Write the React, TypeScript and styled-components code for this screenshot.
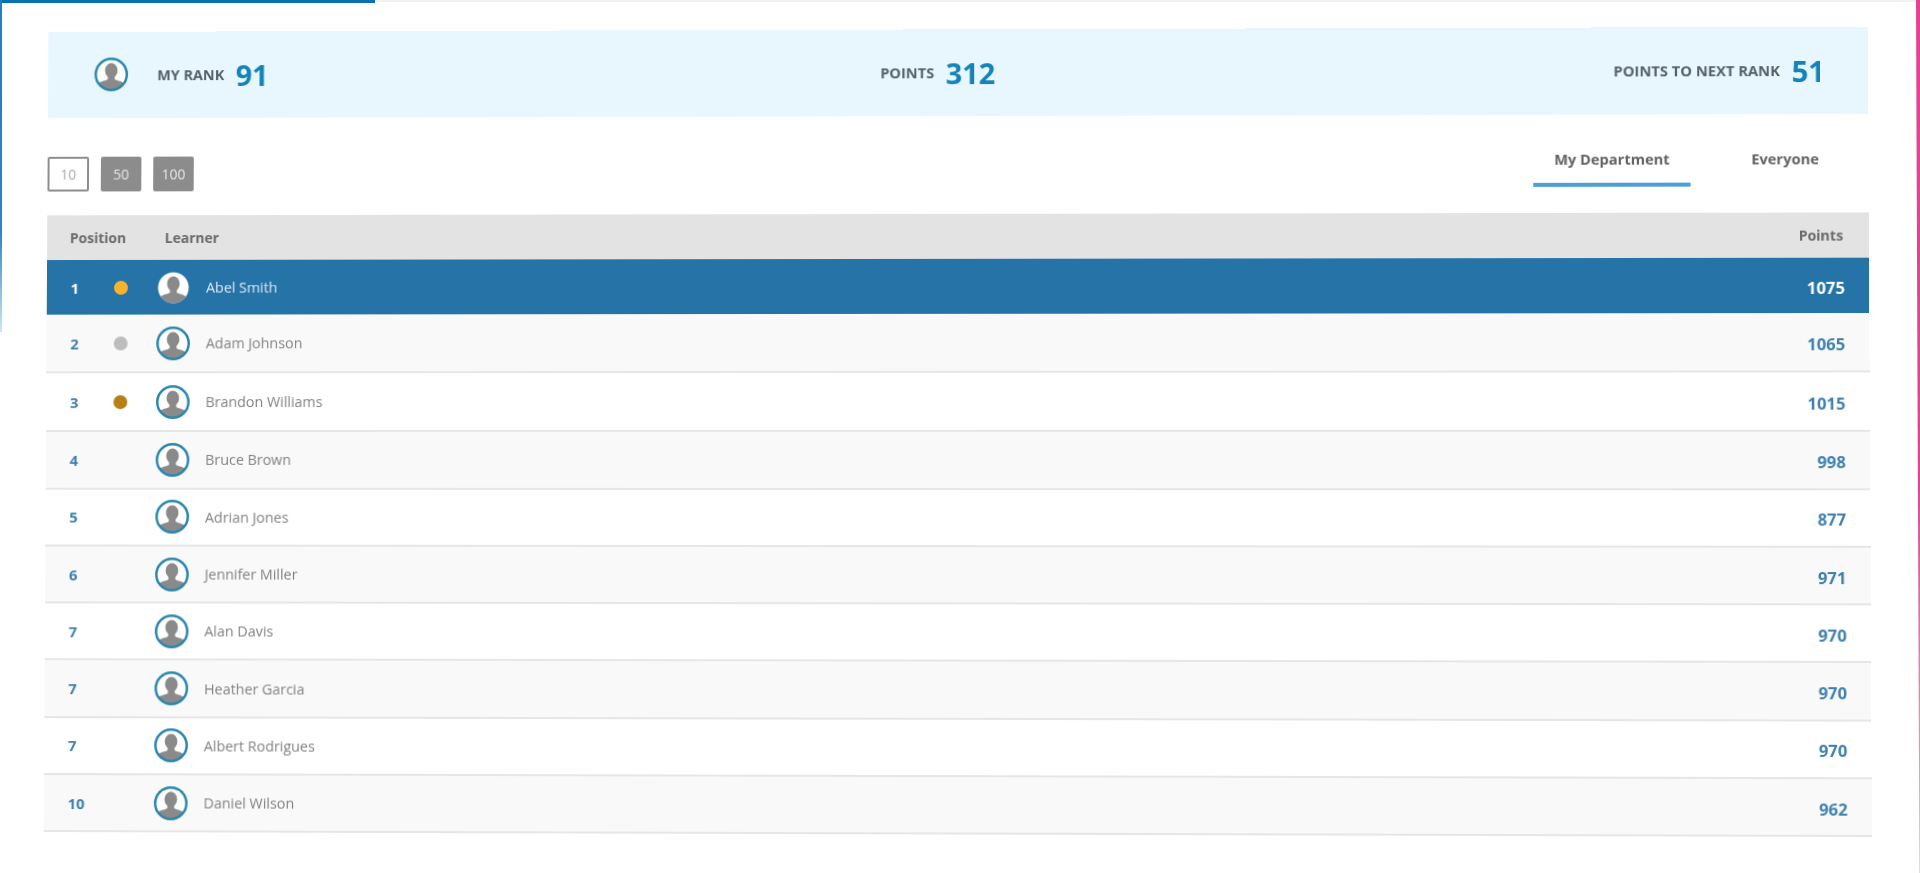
import React from 'react'
import styled, { createGlobalStyle } from 'styled-components'

const GlobalStyle = createGlobalStyle`
  html, body {
    margin: 0;
    padding: 0;
    background: #fff;
  }
  body {
    font-family: 'Open Sans', 'Liberation Sans', sans-serif;
  }
`

const Page = styled.div`
  position: relative;
  width: 1920px;
  height: 873px;
  overflow: hidden;
  background: #fff;
  padding: 30px 0 0 43px;
  box-sizing: border-box;
  filter: blur(0.45px);
`

// the reference is a video frame, so the sheet sits in a slight perspective
const Sheet = styled.div`
  width: 1821.6px;
  padding-left: 4px;
  transform-origin: 4px 0;
  transform: matrix3d(
    0.985827, -0.002887, 0, -0.000006972,
    -0.005836, 0.990081, 0, -0.000006163,
    0, 0, 1, 0,
    1.4, 2, 0, 1
  );
`

const ProgressBar = styled.div`
  position: absolute;
  top: 0;
  left: 0;
  width: 375px;
  height: 3px;
  background: #0b6fb4;
`

const ProgressTrack = styled.div`
  position: absolute;
  top: 0;
  left: 375px;
  right: 0;
  height: 2px;
  background: #f1f1f1;
`

const LeftEdge = styled.div`
  position: absolute;
  top: 0;
  left: 0;
  width: 2px;
  height: 332px;
  background: linear-gradient(180deg, #1f7fc0 0%, #2a86c4 70%, #cfe6f4 100%);
`

const RightEdge = styled.div`
  position: absolute;
  top: 0;
  right: 0;
  width: 4px;
  height: 100%;
  background: linear-gradient(180deg, #e8418f 0%, #d9488f 55%, #f2b3d2 100%);
  clip-path: polygon(0 0, 100% 0, 100% 100%, 85% 100%);
`

const RankBanner = styled.section`
  display: flex;
  justify-content: space-between;
  align-items: center;
  height: 86.5px;
  padding: 0 42px 0 47px;
  box-sizing: border-box;
  background: #e8f7fe;
`

const BannerCell = styled.div`
  display: flex;
  align-items: center;
  gap: 11.5px;
`

const BannerLabel = styled.span`
  font-size: 14.6px;
  font-weight: 700;
  color: #566068;
`

const BannerValue = styled.span`
  font-size: 29px;
  font-weight: 700;
  line-height: 1;
  color: #1483b8;
`

const BannerAvatar = styled.div`
  margin-right: 18px;
`

const Controls = styled.div`
  display: flex;
  justify-content: space-between;
  height: 98.2px;
  padding-top: 39px;
  box-sizing: border-box;
`

const PageSizes = styled.div`
  display: flex;
  gap: 12px;
  height: 35px;
`

const SizeButton = styled.button<{ $active?: boolean }>`
  width: ${({ $active }) => ($active ? '42px' : '41px')};
  height: 35px;
  padding: 0;
  box-sizing: border-box;
  font-family: inherit;
  font-size: 14px;
  border-radius: 2px;
  border: ${({ $active }) => ($active ? '2px solid #8c8c8c' : '0')};
  background: ${({ $active }) => ($active ? '#fff' : '#8c8c8c')};
  color: ${({ $active }) => ($active ? '#a8a8a8' : '#e8e8e8')};
`

const Tabs = styled.div`
  display: flex;
  align-items: flex-start;
  gap: 23.5px;
  margin-top: -4px;
  padding-right: 12px;
`

const Tab = styled.div<{ $active?: boolean }>`
  width: ${({ $active }) => ($active ? '156px' : '140px')};
  height: 37.5px;
  box-sizing: border-box;
  text-align: center;
  font-size: 14.5px;
  font-weight: 700;
  line-height: 20px;
  color: #626262;
  border-bottom: ${({ $active }) => ($active ? '4px solid #4f9ed6' : '0')};
`

const HeaderRow = styled.div`
  display: grid;
  grid-template-columns: 96px 1fr 100px;
  align-items: center;
  height: 45.8px;
  padding: 0 25px 0 23px;
  background: #e3e3e3;
  font-size: 14px;
  font-weight: 700;
  color: #6a6a6a;
`

const RightCell = styled.div`
  text-align: right;
`

const Row = styled.div<{ $highlight: boolean; $odd: boolean; $medal: boolean }>`
  display: grid;
  grid-template-columns: 35px 52px 34px 1fr 100px;
  align-items: center;
  height: ${({ $highlight, $medal }) => ($highlight ? '54.8px' : $medal ? '59px' : '57.3px')};
  padding: 0 23.5px 0 24px;
  box-sizing: border-box;
  border-bottom: ${({ $highlight }) => ($highlight ? '0' : '2px solid #e6e6e6')};
  background: ${({ $highlight, $odd }) =>
    $highlight ? '#2673a8' : $odd ? '#f9f9f9' : '#fff'};
`

const Position = styled.div<{ $highlight: boolean }>`
  font-size: 15px;
  font-weight: 700;
  color: ${({ $highlight }) => ($highlight ? '#fff' : '#3f80ae')};
`

const Medal = styled.div<{ $color: string }>`
  width: 14px;
  height: 14px;
  margin-left: 9px;
  border-radius: 50%;
  background: ${({ $color }) => $color};
`

const Name = styled.div<{ $highlight: boolean }>`
  padding-left: 16px;
  font-size: 14.4px;
  color: ${({ $highlight }) => ($highlight ? '#dfeaf3' : '#828282')};
`

const Score = styled(RightCell)<{ $highlight: boolean }>`
  padding-top: 3px;
  font-size: 16.4px;
  font-weight: 700;
  color: ${({ $highlight }) => ($highlight ? '#fff' : '#3f80ae')};
`

const AvatarSvg = styled.svg`
  display: block;
`

const Avatar = ({ ring }: { ring: string | null }) => (
  <AvatarSvg width={34} height={34} viewBox="0 0 34 34">
    <defs>
      <clipPath id="avatar-clip">
        <circle cx="17" cy="17" r="15.5" />
      </clipPath>
    </defs>
    <circle cx="17" cy="17" r="15.5" fill="#fff" />
    <g clipPath="url(#avatar-clip)" fill="#8a8a8a">
      <ellipse cx="17" cy="13" rx="6.4" ry="7.4" />
      <path d="M13.500 18h7v4c2.500 1.500 8.500 1.800 10 5v7H3.500v-7c1.500-3.200 7.500-3.500 10-5z" />
    </g>
    {ring && <circle cx="17" cy="17" r="15.750" fill="none" stroke={ring} strokeWidth="2.500" />}
  </AvatarSvg>
)

const learners = [
  { pos: 1, name: 'Abel Smith', points: 1075, medal: '#f8b32c' },
  { pos: 2, name: 'Adam Johnson', points: 1065, medal: '#bdbdbd' },
  { pos: 3, name: 'Brandon Williams', points: 1015, medal: '#b87f14' },
  { pos: 4, name: 'Bruce Brown', points: 998 },
  { pos: 5, name: 'Adrian Jones', points: 877 },
  { pos: 6, name: 'Jennifer Miller', points: 971 },
  { pos: 7, name: 'Alan Davis', points: 970 },
  { pos: 7, name: 'Heather Garcia', points: 970 },
  { pos: 7, name: 'Albert Rodrigues', points: 970 },
  { pos: 10, name: 'Daniel Wilson', points: 962 },
]

export default function App() {
  return (
    <Page>
      <GlobalStyle />
      <Sheet>
        <RankBanner>
          <BannerCell>
            <BannerAvatar>
              <Avatar ring="#2a86ae" />
            </BannerAvatar>
            <BannerLabel>MY RANK</BannerLabel>
            <BannerValue>91</BannerValue>
          </BannerCell>
          <BannerCell>
            <BannerLabel>POINTS</BannerLabel>
            <BannerValue>312</BannerValue>
          </BannerCell>
          <BannerCell>
            <BannerLabel>POINTS TO NEXT RANK</BannerLabel>
            <BannerValue>51</BannerValue>
          </BannerCell>
        </RankBanner>
        <Controls>
          <PageSizes>
            <SizeButton $active>10</SizeButton>
            <SizeButton>50</SizeButton>
            <SizeButton>100</SizeButton>
          </PageSizes>
          <Tabs>
            <Tab $active>My Department</Tab>
            <Tab>Everyone</Tab>
          </Tabs>
        </Controls>
        <HeaderRow>
          <div>Position</div>
          <div>Learner</div>
          <RightCell>Points</RightCell>
        </HeaderRow>
        {learners.map((l, i) => {
          const highlight = i === 0
          return (
            <Row key={l.name} $highlight={highlight} $odd={i % 2 === 1} $medal={!!l.medal}>
              <Position $highlight={highlight}>{l.pos}</Position>
              <div>{l.medal && <Medal $color={l.medal} />}</div>
              <Avatar ring={highlight ? null : '#2a86ae'} />
              <Name $highlight={highlight}>{l.name}</Name>
              <Score $highlight={highlight}>{l.points}</Score>
            </Row>
          )
        })}
      </Sheet>
      <ProgressTrack />
      <ProgressBar />
      <LeftEdge />
      <RightEdge />
    </Page>
  )
}
